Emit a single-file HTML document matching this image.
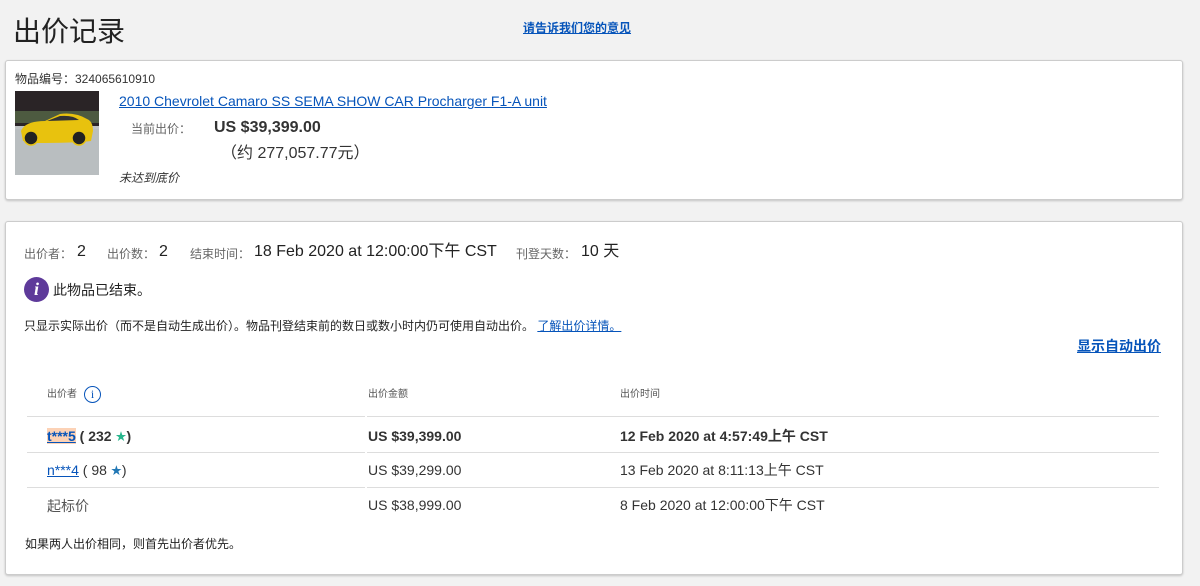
<!DOCTYPE html>
<html><head><meta charset="utf-8"><style>
*{margin:0;padding:0;box-sizing:border-box}
body{width:1200px;height:586px;background:#f2f2f2;font-family:"Liberation Sans","Noto Sans CJK SC",sans-serif;color:#333;position:relative;overflow:hidden}
.a{position:absolute;white-space:nowrap;line-height:1.15}
a,.lk{color:#0654ba;text-decoration:underline}
.panel{position:absolute;left:5px;width:1178px;background:#fff;border:1px solid #ccc;border-radius:3px;box-shadow:0 1px 2px rgba(0,0,0,.2)}
.ln{position:absolute;height:1px;background:#ddd}
.st{font-size:11px;vertical-align:1px}
.l{font-size:12px;color:#666;line-height:20px}
.v{font-size:16px;color:#222;line-height:20px}
</style></head><body>
<div class="a" style="left:13px;top:16px;font-size:28px;color:#222">出价记录</div>
<div class="a lk" style="left:523px;top:22px;font-size:12px;font-weight:bold">请告诉我们您的意见</div>

<div class="panel" style="top:60px;height:140px"></div>
<div class="a" style="left:15px;top:73px;font-size:12px;color:#333">物品编号：324065610910</div>
<svg class="a" style="left:15px;top:91px" width="84" height="84" viewBox="0 0 84 84">
<rect width="84" height="84" fill="#bfc3c4"/>
<rect width="84" height="35" fill="#2a2426"/>
<rect y="20" width="84" height="12" fill="#4d5a40"/>
<rect y="38" width="84" height="46" fill="#b9bec0"/>
<path d="M6 40 Q10 30 30 30 L45 23 Q60 21 72 28 Q78 30 78 40 L76 50 Q60 52 20 52 L8 50 Z" fill="#e8c20e"/>
<path d="M32 30 L45 25 Q58 24 64 29 Z" fill="#333"/>
<circle cx="16" cy="47" r="7" fill="#222" stroke="#e8c20e" stroke-width="1.5"/>
<circle cx="64" cy="47" r="7" fill="#222" stroke="#e8c20e" stroke-width="1.5"/>
</svg>
<div class="a lk" style="left:119px;top:93px;font-size:14px">2010 Chevrolet Camaro SS SEMA SHOW CAR Procharger F1-A unit</div>
<div class="a" style="left:131px;top:123px;font-size:12px;color:#666">当前出价：</div>
<div class="a" style="left:214px;top:119px;font-size:16px;font-weight:bold;color:#333">US $39,399.00</div>
<div class="a" style="left:221px;top:145px;font-size:16px;color:#333">（约 277,057.77元）</div>
<div class="a" style="left:119px;top:172px;font-size:12px;font-style:italic;color:#333">未达到底价</div>

<div class="panel" style="top:221px;height:354px"></div>
<div class="a l" style="left:24px;top:244px">出价者：</div><div class="a v" style="left:77px;top:242px">2</div>
<div class="a l" style="left:107px;top:244px">出价数：</div><div class="a v" style="left:159px;top:242px">2</div>
<div class="a l" style="left:190px;top:244px">结束时间：</div><div class="a v" style="left:254px;top:242px">18 Feb 2020 at 12:00:00下午 CST</div>
<div class="a l" style="left:516px;top:244px">刊登天数：</div><div class="a v" style="left:581px;top:242px">10 天</div>
<div class="a" style="left:24px;top:277px;width:25px;height:25px;border-radius:50%;background:#5e3a9a;color:#fff;font:italic bold 18px 'Liberation Serif',serif;text-align:center;line-height:25px">i</div>
<div class="a" style="left:53px;top:282px;font-size:14px;color:#222">此物品已结束。</div>
<div class="a" style="left:24px;top:320px;font-size:12px;color:#222">只显示实际出价（而不是自动生成出价）。物品刊登结束前的数日或数小时内仍可使用自动出价。 <span class="lk">了解出价详情。</span></div>
<div class="a lk" style="left:1077px;top:338px;font-size:14px;font-weight:bold">显示自动出价</div>

<div class="a" style="left:47px;top:389px;font-size:10px;color:#555">出价者</div>
<div class="a" style="left:84px;top:386px;width:17px;height:17px;border:1.5px solid #0654ba;border-radius:50%;color:#0654ba;font-size:12px;text-align:center;line-height:14px;font-family:'Liberation Serif',serif">i</div>
<div class="a" style="left:368px;top:389px;font-size:10px;color:#555">出价金额</div>
<div class="a" style="left:620px;top:389px;font-size:10px;color:#555">出价时间</div>
<div class="ln" style="left:27px;top:416px;width:338px"></div><div class="ln" style="left:367px;top:416px;width:792px"></div>
<div class="ln" style="left:27px;top:452px;width:338px"></div><div class="ln" style="left:367px;top:452px;width:792px"></div>
<div class="ln" style="left:27px;top:487px;width:338px"></div><div class="ln" style="left:367px;top:487px;width:792px"></div>

<div class="a" style="left:47px;top:426px;font-size:14px;font-weight:bold;line-height:20px"><span class="lk" style="background:#fcd2b6">t***5</span> ( 232 <span class="st" style="color:#28b68d">★</span>)</div>
<div class="a" style="left:368px;top:426px;font-size:14px;font-weight:bold;line-height:20px">US $39,399.00</div>
<div class="a" style="left:620px;top:426px;font-size:14px;font-weight:bold;line-height:20px">12 Feb 2020 at 4:57:49上午 CST</div>
<div class="a" style="left:47px;top:460px;font-size:14px;line-height:20px"><span class="lk">n***4</span> ( 98 <span class="st" style="color:#2278b5">★</span>)</div>
<div class="a" style="left:368px;top:460px;font-size:14px;line-height:20px">US $39,299.00</div>
<div class="a" style="left:620px;top:460px;font-size:14px;line-height:20px">13 Feb 2020 at 8:11:13上午 CST</div>
<div class="a" style="left:47px;top:496px;font-size:14px;color:#555;line-height:20px">起标价</div>
<div class="a" style="left:368px;top:495px;font-size:14px;line-height:20px">US $38,999.00</div>
<div class="a" style="left:620px;top:495px;font-size:14px;line-height:20px">8 Feb 2020 at 12:00:00下午 CST</div>
<div class="a" style="left:25px;top:538px;font-size:12px;color:#222">如果两人出价相同，则首先出价者优先。</div>
</body></html>
